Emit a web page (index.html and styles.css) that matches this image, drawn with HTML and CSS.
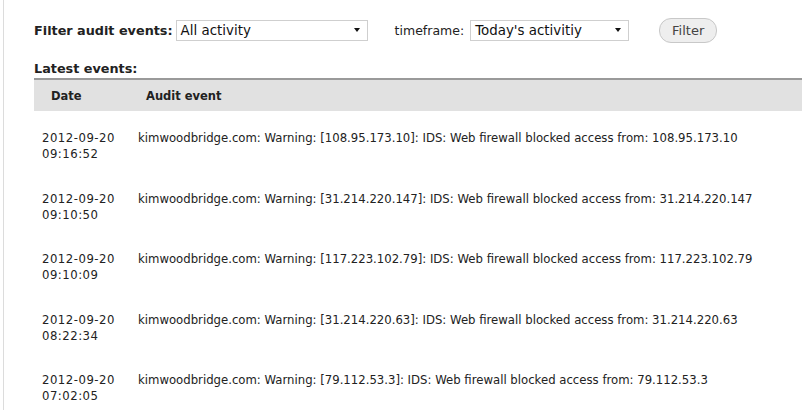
FILE: index.html
```html
<!DOCTYPE html>
<html>
<head>
<meta charset="utf-8">
<link rel="stylesheet" href="styles.css">
</head>
<body>
<div class="page">
  <form class="filters">
    <label class="flabel">Filter audit events:</label>
    <div class="sel sel-type"><span>All activity</span><i class="caret"></i></div>
    <label class="tlabel">timeframe:</label>
    <div class="sel sel-time"><span>Today's activitiy</span><i class="caret"></i></div>
    <button type="button" class="btn">Filter</button>
  </form>
  <h3 class="latest">Latest events:</h3>
  <table class="events">
    <thead>
      <tr><th class="c-date">Date</th><th class="c-ev">Audit event</th></tr>
    </thead>
    <tbody>
      <tr><td class="d">2012-09-20<br>09:16:52</td><td class="e">kimwoodbridge.com: Warning: [108.95.173.10]: IDS: Web firewall blocked access from: 108.95.173.10</td></tr>
      <tr><td class="d">2012-09-20<br>09:10:50</td><td class="e">kimwoodbridge.com: Warning: [31.214.220.147]: IDS: Web firewall blocked access from: 31.214.220.147</td></tr>
      <tr><td class="d">2012-09-20<br>09:10:09</td><td class="e">kimwoodbridge.com: Warning: [117.223.102.79]: IDS: Web firewall blocked access from: 117.223.102.79</td></tr>
      <tr><td class="d">2012-09-20<br>08:22:34</td><td class="e">kimwoodbridge.com: Warning: [31.214.220.63]: IDS: Web firewall blocked access from: 31.214.220.63</td></tr>
      <tr><td class="d">2012-09-20<br>07:02:05</td><td class="e">kimwoodbridge.com: Warning: [79.112.53.3]: IDS: Web firewall blocked access from: 79.112.53.3</td></tr>
    </tbody>
  </table>
</div>
</body>
</html>
```
FILE: styles.css
```css
html, body {
  margin: 0;
  padding: 0;
  background: #fff;
  overflow: hidden;
}
body {
  font-family: "DejaVu Sans", Verdana, sans-serif;
  color: #222;
  width: 802px;
  height: 410px;
}
.page {
  margin-left: 3px;
  border-left: 1px solid #dcdcdc;
  height: 410px;
  padding-left: 30px;
  padding-top: 18px;
  box-sizing: border-box;
  width: 830px;
}
.filters {
  display: flex;
  align-items: center;
  height: 24px;
  margin: 0;
}
.flabel {
  font-weight: bold;
  font-size: 12.8px;
  color: #222;
  margin-right: 3px;
}
.sel {
  border: 1px solid #cfcfcf;
  background: #fff;
  display: flex;
  align-items: center;
  justify-content: space-between;
  padding: 0 7px 0 4px;
  box-sizing: border-box;
  font-size: 13.4px;
  color: #111;
}
.sel span { position: relative; top: 0.5px; }
.sel-type { width: 192px; height: 21px; }
.sel-time { width: 159px; height: 21px; }
.caret {
  width: 0;
  height: 0;
  border-left: 3.5px solid transparent;
  border-right: 3.5px solid transparent;
  border-top: 4px solid #111;
}
.tlabel {
  font-size: 12.5px;
  margin-left: 27px;
  margin-right: 6px;
  color: #222;
}
.btn {
  margin-left: 30px;
  width: 58px;
  height: 25px;
  border: 1px solid #c8c8c8;
  border-radius: 12px;
  background: #eeeeee;
  font-family: "DejaVu Sans", Verdana, sans-serif;
  font-size: 13px;
  color: #444;
  padding: 0;
}
.latest {
  margin: 19px 0 0 0;
  font-size: 12.8px;
  font-weight: bold;
  line-height: 16px;
  color: #222;
}
.events {
  border-collapse: collapse;
  width: 800px;
  margin-top: 1px;
}
.events thead tr {
  background: #e1e1e1;
  border-top: 2px solid #9a9a9a;
}
.events th {
  text-align: left;
  font-size: 11.5px;
  font-weight: bold;
  height: 31px;
  padding: 0;
  vertical-align: middle;
  color: #222;
}
.c-date { width: 104px; padding-left: 17px !important; box-sizing: border-box; }
.events th.c-ev { padding-left: 8px; }
.events td {
  font-size: 11.7px;
  line-height: 16px;
  vertical-align: top;
  padding-top: 14.25px;
  padding-bottom: 14.25px;
  color: #222;
}
.events tbody tr:first-child td { padding-top: 19.25px; }
.events td.d { padding-left: 8px; letter-spacing: 0.5px; }
.events td.e { padding-left: 0; }
```
